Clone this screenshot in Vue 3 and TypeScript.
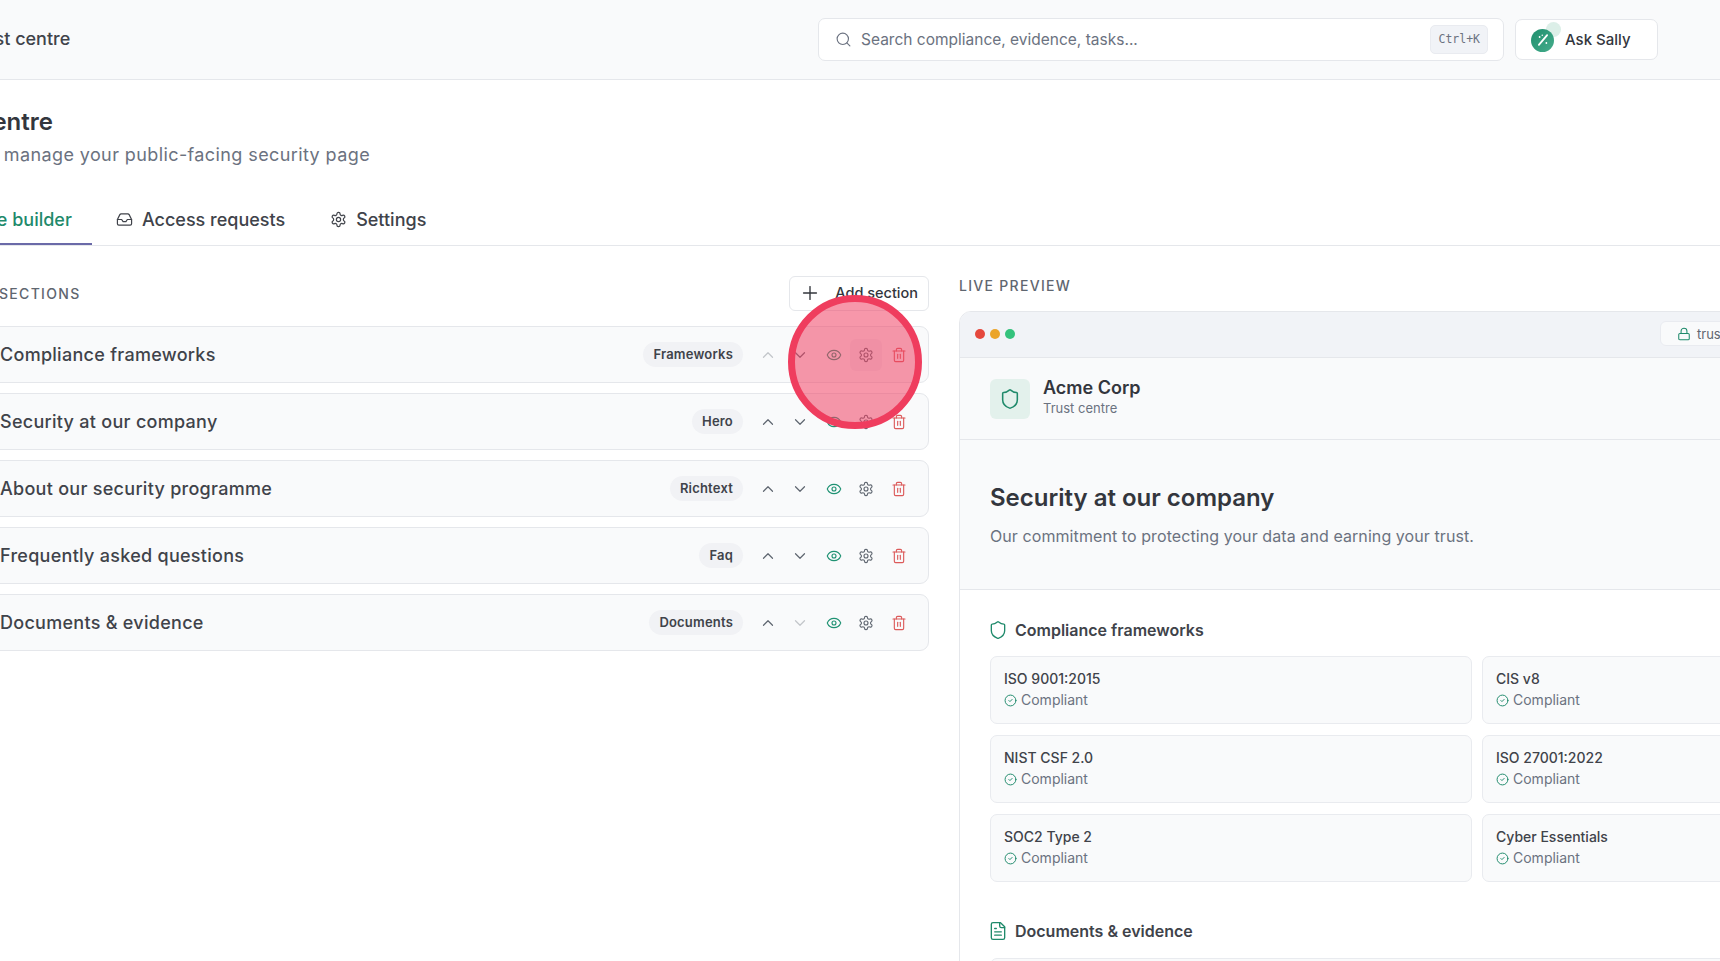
<script setup lang="ts">
const icons: Record<string, string> = {
  search: '<circle cx="11" cy="11" r="8"/><path d="m21 21-4.3-4.3"/>',
  inbox: '<polyline points="22 12 16 12 14 15 10 15 8 12 2 12"/><path d="M5.45 5.11 2 12v6a2 2 0 0 0 2 2h16a2 2 0 0 0 2-2v-6l-3.45-6.89A2 2 0 0 0 16.76 4H7.24a2 2 0 0 0-1.79 1.11z"/>',
  gear: '<path d="M12.22 2h-.44a2 2 0 0 0-2 2v.18a2 2 0 0 1-1 1.73l-.43.25a2 2 0 0 1-2 0l-.15-.08a2 2 0 0 0-2.73.73l-.22.38a2 2 0 0 0 .73 2.73l.15.1a2 2 0 0 1 1 1.72v.51a2 2 0 0 1-1 1.74l-.15.09a2 2 0 0 0-.73 2.73l.22.38a2 2 0 0 0 2.73.73l.15-.08a2 2 0 0 1 2 0l.43.25a2 2 0 0 1 1 1.73V20a2 2 0 0 0 2 2h.44a2 2 0 0 0 2-2v-.18a2 2 0 0 1 1-1.73l.43-.25a2 2 0 0 1 2 0l.15.08a2 2 0 0 0 2.73-.73l.22-.39a2 2 0 0 0-.73-2.73l-.15-.08a2 2 0 0 1-1-1.74v-.5a2 2 0 0 1 1-1.74l.15-.09a2 2 0 0 0 .73-2.73l-.22-.38a2 2 0 0 0-2.73-.73l-.15.08a2 2 0 0 1-2 0l-.43-.25a2 2 0 0 1-1-1.73V4a2 2 0 0 0-2-2z"/><circle cx="12" cy="12" r="3"/>',
  eye: '<path d="M2.062 12.348a1 1 0 0 1 0-.696 10.75 10.75 0 0 1 19.876 0 1 1 0 0 1 0 .696 10.75 10.75 0 0 1-19.876 0"/><circle cx="12" cy="12" r="3"/>',
  trash: '<path d="M3 6h18"/><path d="M19 6v14c0 1-1 2-2 2H7c-1 0-2-1-2-2V6"/><path d="M8 6V4c0-1 1-2 2-2h4c1 0 2 1 2 2v2"/><line x1="10" x2="10" y1="11" y2="17"/><line x1="14" x2="14" y1="11" y2="17"/>',
  up: '<path d="m18 15-6-6-6 6"/>',
  down: '<path d="m6 9 6 6 6-6"/>',
  plus: '<path d="M5 12h14"/><path d="M12 5v14"/>',
  shield: '<path d="M20 13c0 5-3.5 7.5-7.66 8.95a1 1 0 0 1-.67-.01C7.5 20.5 4 18 4 13V6a1 1 0 0 1 1-1c2 0 4.5-1.2 6.24-2.72a1.17 1.17 0 0 1 1.52 0C14.51 3.81 17 5 19 5a1 1 0 0 1 1 1z"/>',
  lock: '<rect x="3" y="11" width="18" height="11" rx="2"/><path d="M7 11V7a5 5 0 0 1 10 0v4"/>',
  check: '<circle cx="12" cy="12" r="10"/><path d="m9 12 2 2 4-4"/>',
  file: '<path d="M15 2H6a2 2 0 0 0-2 2v16a2 2 0 0 0 2 2h12a2 2 0 0 0 2-2V7Z"/><path d="M14 2v4a2 2 0 0 0 2 2h4"/><path d="M10 9H8"/><path d="M16 13H8"/><path d="M16 17H8"/>',
  wand: '<line x1="17.5" x2="6.5" y1="5.5" y2="18.5"/><circle cx="7.5" cy="8" r="1.2" fill="currentColor" stroke="none"/><circle cx="16.5" cy="16" r="1.2" fill="currentColor" stroke="none"/><circle cx="11" cy="5.5" r="1" fill="currentColor" stroke="none"/>',
}

const sections = [
  { title: 'Compliance frameworks', badge: 'Frameworks', upOff: true },
  { title: 'Security at our company', badge: 'Hero' },
  { title: 'About our security programme', badge: 'Richtext' },
  { title: 'Frequently asked questions', badge: 'Faq' },
  { title: 'Documents & evidence', badge: 'Documents', downOff: true },
]

const frameworks = ['ISO 9001:2015', 'CIS v8', 'NIST CSF 2.0', 'ISO 27001:2022', 'SOC2 Type 2', 'Cyber Essentials']
</script>

<template>
  <div class="app">
    <header class="topbar">
      <div class="crumb">Trust centre</div>
      <div class="search">
        <svg class="ic search-ic" viewBox="0 0 24 24" v-html="icons.search"></svg>
        <span class="search-text">Search compliance, evidence, tasks...</span>
        <kbd class="kbd">Ctrl+K</kbd>
      </div>
      <button class="sally">
        <span class="sally-badge">
          <svg class="ic" viewBox="0 0 24 24" v-html="icons.wand"></svg>
        </span>
        <span>Ask Sally</span>
      </button>
    </header>

    <div class="head">
      <h1 class="title">Trust centre</h1>
      <p class="sub">Configure and manage your public-facing security page</p>
    </div>

    <nav class="tabs">
      <div class="tab active">Page builder</div>
      <div class="tab">
        <svg class="ic" viewBox="0 0 24 24" v-html="icons.inbox"></svg>
        Access requests
      </div>
      <div class="tab">
        <svg class="ic" viewBox="0 0 24 24" v-html="icons.gear"></svg>
        Settings
      </div>
    </nav>

    <main class="content">
      <section class="builder">
        <div class="builder-head">
          <span class="label">SECTIONS</span>
          <button class="add">
            <svg class="ic" viewBox="0 0 24 24" v-html="icons.plus"></svg>
            Add section
          </button>
        </div>
        <div class="rows">
          <div v-for="(s, i) in sections" :key="s.title" class="row">
            <span class="row-title">{{ s.title }}</span>
            <span class="badge">{{ s.badge }}</span>
            <div class="actions">
              <span class="act chev" :class="{ off: s.upOff }"><svg class="ic" viewBox="0 0 24 24" v-html="icons.up"></svg></span>
              <span class="act chev" :class="{ off: s.downOff }"><svg class="ic" viewBox="0 0 24 24" v-html="icons.down"></svg></span>
              <span class="act eye"><svg class="ic" viewBox="0 0 24 24" v-html="icons.eye"></svg></span>
              <span class="act gear" :class="{ hover: i === 0 }"><svg class="ic" viewBox="0 0 24 24" v-html="icons.gear"></svg></span>
              <span class="act trash"><svg class="ic" viewBox="0 0 24 24" v-html="icons.trash"></svg></span>
            </div>
          </div>
        </div>
      </section>

      <section class="preview">
        <div class="label preview-label">LIVE PREVIEW</div>
        <div class="frame">
          <div class="chrome">
            <i class="dot red"></i><i class="dot amber"></i><i class="dot green"></i>
            <div class="url">
              <svg class="ic" viewBox="0 0 24 24" v-html="icons.lock"></svg>
              <span>trust.acmecorp.com</span>
            </div>
          </div>
          <div class="brand">
            <div class="logo"><svg class="ic" viewBox="0 0 24 24" v-html="icons.shield"></svg></div>
            <div class="brand-text">
              <div class="brand-name">Acme Corp</div>
              <div class="brand-sub">Trust centre</div>
            </div>
          </div>
          <div class="hero">
            <h2>Security at our company</h2>
            <p>Our commitment to protecting your data and earning your trust.</p>
          </div>
          <div class="body">
            <h3><svg class="ic" viewBox="0 0 24 24" v-html="icons.shield"></svg>Compliance frameworks</h3>
            <div class="grid">
              <div v-for="f in frameworks" :key="f" class="card">
                <div class="card-name">{{ f }}</div>
                <div class="card-status">
                  <svg class="ic" viewBox="0 0 24 24" v-html="icons.check"></svg>
                  Compliant
                </div>
              </div>
            </div>
            <h3 class="docs"><svg class="ic" viewBox="0 0 24 24" v-html="icons.file"></svg>Documents &amp; evidence</h3>
            <div class="card doc-card"></div>
          </div>
        </div>
      </section>
    </main>

    <div class="click-ring"></div>
  </div>
</template>

<style>
html, body {
  margin: 0;
  overflow: hidden;
  background: #fff;
}
</style>

<style scoped>
.app {
  position: relative;
  width: 1720px;
  height: 961px;
  overflow: hidden;
  font-family: Inter, "Liberation Sans", sans-serif;
  color: #33363d;
  background: #fff;
}

.ic {
  display: block;
  width: 16px;
  height: 16px;
  fill: none;
  stroke: currentColor;
  stroke-width: 2;
  stroke-linecap: round;
  stroke-linejoin: round;
  flex: none;
}

.topbar {
  display: flex;
  align-items: center;
  height: 79px;
  padding-right: 62px;
  background: #f9fafb;
  border-bottom: 1px solid #e5e7eb;
}

.crumb {
  margin: -2px auto 0 -34px;
  font-size: 18px;
  font-weight: 500;
  color: #40434a;
}

.search {
  display: flex;
  align-items: center;
  box-sizing: border-box;
  width: 686px;
  height: 43px;
  padding: 0 15px 0 16px;
  background: #fff;
  border: 1px solid #e5e7eb;
  border-radius: 7px;
}

.search-ic {
  width: 17px;
  height: 17px;
  color: #6b7280;
  stroke-width: 1.6;
}

.search-text {
  margin-left: 9px;
  font-size: 15.5px;
  color: #6b7280;
}

.kbd {
  margin-left: auto;
  padding: 0 7px;
  height: 27px;
  line-height: 27px;
  font-family: "DejaVu Sans Mono", monospace;
  font-size: 11.5px;
  color: #6b7280;
  background: #f1f3f7;
  border: 1px solid #e9ebf0;
  border-radius: 5px;
}

.sally {
  display: flex;
  align-items: center;
  gap: 11px;
  isolation: isolate;
  width: 143px;
  height: 41px;
  margin-left: 11px;
  padding: 0 14px 0 15px;
  background: #fff;
  border: 1px solid #e5e7eb;
  border-radius: 7px;
  font: 500 15px Inter, "Liberation Sans", sans-serif;
  color: #33363d;
}

.sally-badge {
  position: relative;
  display: flex;
  align-items: center;
  justify-content: center;
  width: 23px;
  height: 23px;
  margin-top: 1px;
  border-radius: 50%;
  background: linear-gradient(135deg, #1f8f6e, #45ac8b);
  color: #fff;
}

.sally-badge::after {
  content: "";
  position: absolute;
  top: -7px;
  right: -7px;
  width: 15px;
  height: 15px;
  border-radius: 50%;
  background: #dcefe8;
  z-index: -1;
}

.sally-badge .ic {
  width: 18px;
  height: 18px;
  stroke-width: 2.4;
}

.head {
  margin-left: -88px;
  padding-top: 26px;
}

.title {
  margin: 0;
  font-size: 24px;
  line-height: 32px;
  font-weight: 600;
  color: #33363d;
}

.sub {
  margin: 4px 0 0 -40px;
  font-size: 18px;
  line-height: 26px;
  letter-spacing: 0.4px;
  color: #6b7280;
}

.tabs {
  display: flex;
  height: 50px;
  margin-top: 27px;
  border-bottom: 1px solid #e5e7eb;
}

.tab {
  display: flex;
  align-items: center;
  gap: 9px;
  height: 48px;
  padding: 0 21px 0 24px;
  font-size: 18px;
  font-weight: 500;
  color: #40434a;
  border-bottom: 2px solid transparent;
}

.tab .ic {
  width: 17px;
  height: 17px;
  stroke-width: 1.7;
}

.tab.active {
  margin-left: -56px;
  padding: 0 20px;
  color: #1f8a6b;
  border-bottom-color: #6a6aa8;
}

.content {
  display: flex;
  align-items: flex-start;
  gap: 30px;
  padding-top: 30px;
}

.builder {
  flex: none;
  width: 949px;
  margin-left: -20px;
}

.builder-head {
  display: flex;
  align-items: center;
  justify-content: space-between;
  height: 35px;
  margin-bottom: 15px;
  padding-left: 19px;
}

.label {
  margin-top: -1px;
  font-size: 14px;
  font-weight: 500;
  letter-spacing: 1.3px;
  color: #5f6670;
}

.add {
  display: flex;
  align-items: center;
  gap: 14px;
  height: 35px;
  padding: 0 10px 2px 9px;
  background: #fff;
  border: 1px solid #e5e7eb;
  border-radius: 6px;
  font: 500 14.5px Inter, "Liberation Sans", sans-serif;
  color: #33363d;
}

.add .ic {
  width: 22px;
  height: 22px;
  stroke-width: 1.5;
}

.rows {
  display: flex;
  flex-direction: column;
  gap: 10px;
}

.row {
  display: flex;
  align-items: center;
  height: 57px;
  box-sizing: border-box;
  padding: 0 13px 0 19px;
  background: #f9fafb;
  border: 1px solid #e5e7eb;
  border-radius: 9px;
}

.row-title {
  margin: -1px auto 0 0;
  font-size: 18px;
  font-weight: 500;
  letter-spacing: 0.28px;
  color: #40434a;
}

.badge {
  height: 25px;
  margin-top: -1px;
  padding: 0 10px;
  line-height: 25px;
  font-size: 13px;
  font-weight: 600;
  letter-spacing: 0.2px;
  color: #40434a;
  background: #f1f2f5;
  border-radius: 13px;
}

.actions {
  display: flex;
  align-items: center;
  margin-left: 9px;
}

.act {
  display: flex;
  align-items: center;
  justify-content: center;
  width: 32px;
  height: 32px;
  color: #5f6670;
  border-radius: 6px;
}

.act .ic {
  width: 16px;
  height: 16px;
  stroke-width: 1.7;
}

.act.chev .ic {
  width: 18px;
  height: 18px;
  stroke-width: 1.6;
}

.act.off {
  opacity: 0.35;
}

.act.eye {
  margin-left: 2px;
  color: #1f9273;
}

.act.trash {
  margin-left: 1px;
  color: #dc5a5a;
}

.act.hover {
  background: #eff0f3;
}

.preview {
  flex: none;
  width: 1010px;
}

.preview-label {
  height: 20px;
  line-height: 20px;
  margin: 0 0 15px;
}

.frame {
  border: 1px solid #e5e7eb;
  border-radius: 12px 0 0 0;
  overflow: hidden;
  background: #fff;
}

.chrome {
  display: flex;
  align-items: center;
  gap: 5px;
  box-sizing: border-box;
  height: 46px;
  padding: 0 0 2px 15px;
  background: #f1f3f7;
  border-bottom: 1px solid #e5e7eb;
}

.dot {
  width: 10px;
  height: 10px;
  border-radius: 50%;
}

.dot.red { background: #e5483d; }
.dot.amber { background: #eba52a; }
.dot.green { background: #34c27c; }

.url {
  display: flex;
  align-items: center;
  gap: 6px;
  margin-left: 640px;
  width: 200px;
  height: 23px;
  padding: 0 15px 0 16px;
  font-size: 13px;
  color: #5f6670;
  background: #f9fafb;
  border: 1px solid #e9ebf0;
  border-radius: 6px;
}

.url .ic {
  width: 14px;
  height: 14px;
  color: #1f8a6b;
  stroke-width: 1.8;
}

.brand {
  display: flex;
  align-items: center;
  gap: 13px;
  height: 81px;
  padding-left: 30px;
  background: #f9fafb;
  border-bottom: 1px solid #e5e7eb;
}

.logo {
  display: flex;
  align-items: center;
  justify-content: center;
  width: 40px;
  height: 40px;
  border-radius: 6px;
  color: #1f8a6b;
  background: #e3f1ec;
}

.logo .ic {
  width: 22px;
  height: 22px;
  stroke-width: 1.7;
}

.brand-text {
  margin-bottom: 3px;
}

.brand-name {
  font-size: 18px;
  line-height: 22px;
  font-weight: 600;
  color: #33363d;
}

.brand-sub {
  font-size: 13px;
  line-height: 18px;
  color: #6b7280;
}

.hero {
  padding: 41px 30px 40px;
  background: #f9fafb;
  border-bottom: 1px solid #e5e7eb;
}

.hero h2 {
  margin: 0;
  font-size: 24px;
  line-height: 34px;
  font-weight: 600;
  color: #33363d;
}

.hero p {
  margin: 8px 0 0;
  font-size: 16px;
  line-height: 26px;
  letter-spacing: 0.08px;
  color: #6b7280;
}

.body {
  padding: 27px 30px 0;
}

.body h3 {
  display: flex;
  align-items: center;
  gap: 7px;
  height: 26px;
  margin: 0 0 13px;
  font-size: 16px;
  font-weight: 600;
  color: #40434a;
}

.body h3 .ic {
  margin-left: -2px;
  color: #1f8a6b;
  width: 20px;
  height: 20px;
  stroke-width: 1.6;
}

.body h3.docs {
  margin: 36px 0 14px;
}

.grid {
  display: grid;
  grid-template-columns: 482px 482px;
  grid-auto-rows: 68px;
  gap: 11px 10px;
}

.card {
  box-sizing: border-box;
  padding: 11px 13px;
  background: #f9fafb;
  border: 1px solid #e9ebef;
  border-radius: 7px;
}

.card-name {
  font-size: 14px;
  line-height: 22px;
  font-weight: 500;
  color: #40434a;
}

.card-status {
  display: flex;
  align-items: center;
  gap: 4px;
  font-size: 14px;
  line-height: 20px;
  color: #6b7280;
}

.card-status .ic {
  width: 13px;
  height: 13px;
  color: #1f8a6b;
  stroke-width: 1.8;
}

.doc-card {
  height: 68px;
}

.click-ring {
  position: absolute;
  left: 788px;
  top: 295px;
  box-sizing: border-box;
  width: 134px;
  height: 134px;
  border: 7px solid #ef3d5e;
  border-radius: 50%;
  background: rgba(240, 66, 100, 0.55);
}
</style>
